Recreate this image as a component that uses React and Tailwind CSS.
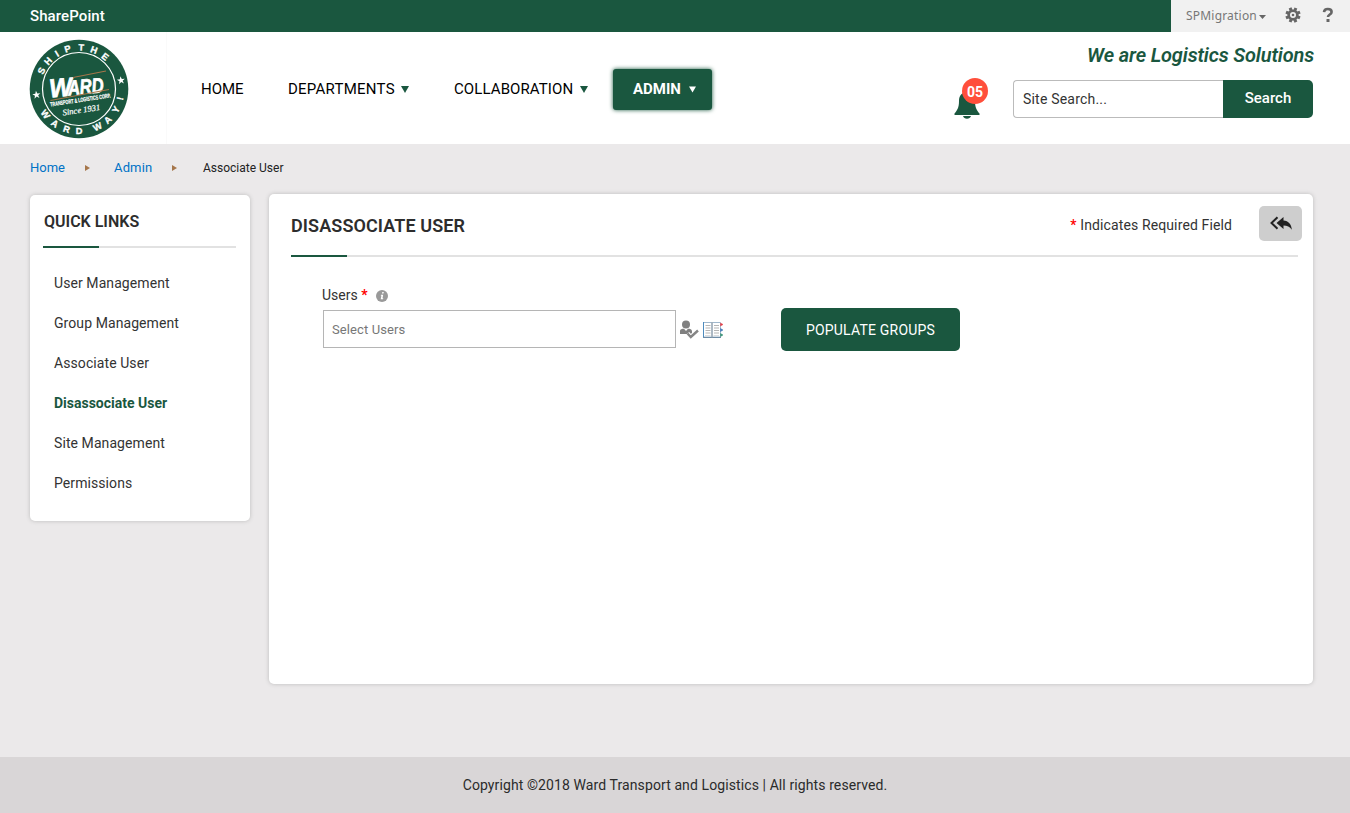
import React from 'react';

const GREEN = '#1a573f';

const topLetters = [['S', -64], ['H', -48], ['I', -32], ['P', -16], ['T', 3], ['H', 21], ['E', 39]];
const bottomLetters = [['W', 53], ['A', 35], ['R', 17], ['D', 0], ['W', -26], ['A', -43], ['Y', -61], ['!', -77]];
const star = 'M0-4.200 1-1.300 4-1.300 1.600.5 2.500 3.400 0 1.600-2.500 3.400-1.600.5-4-1.300-1-1.300Z';

function Logo() {
  return (
    <svg className="block h-[100px] w-[100px] overflow-visible" viewBox="0 0 100 100" fontFamily="'Liberation Sans', sans-serif" fontWeight="700" fill="#fff">
      <circle cx="50" cy="50" r="49.300" fill={GREEN} />
      <circle cx="50" cy="50" r="36.500" fill="none" stroke="#fff" strokeWidth="1.200" />
      {topLetters.map(([c, a], i) => (
        <text key={i} x="50" y="11.500" fontSize="9.200" textAnchor="middle" stroke="#fff" strokeWidth=".3" transform={`rotate(${a} 50 50)`}>{c}</text>
      ))}
      {bottomLetters.map(([c, a], i) => (
        <text key={i} x="50" y="95.300" fontSize="9.200" textAnchor="middle" stroke="#fff" strokeWidth=".3" transform={`rotate(${a} 50 50)`}>{c}</text>
      ))}
      <path d={star} transform="translate(7.500 56) rotate(-8)" />
      <path d={star} transform="translate(92 41.500) rotate(-8)" />
      <g transform="translate(21 58.500) rotate(-5)">
        <text x="0" y="0" fontSize="26" fontStyle="italic" textLength="23" lengthAdjust="spacingAndGlyphs" stroke="#fff" strokeWidth=".7">W</text>
        <text x="18.500" y="-.5" fontSize="21" fontStyle="italic" textLength="36" lengthAdjust="spacingAndGlyphs" stroke="#fff" strokeWidth=".7">ARD</text>
      </g>
      <path d="M44 38.500 77 32M21.500 61.500 80 50.500" stroke="#a5764b" strokeWidth="1.100" />
      <text transform="translate(21.500 67.500) rotate(-8.500)" fontSize="6" textLength="61" lengthAdjust="spacingAndGlyphs" stroke="#fff" strokeWidth=".2">TRANSPORT &amp; LOGISTICS CORP.</text>
      <text transform="translate(34 76.500) rotate(-8.500)" fontFamily="'Liberation Serif', serif" fontStyle="italic" fontWeight="400" fontSize="8.500" textLength="38" lengthAdjust="spacingAndGlyphs" stroke="#fff" strokeWidth=".2">Since 1931</text>
    </svg>
  );
}

function Down({ className }) {
  return <svg className={className} viewBox="0 0 8 7" fill="currentColor"><path d="M0 0h8L4 7z" /></svg>;
}

function TopBar() {
  return (
    <div className="flex h-8 justify-between bg-[#1a573f]">
      <div className="pl-[30px] text-[15px] leading-[33px] font-medium tracking-[0.1px] text-white">SharePoint</div>
      <div className="flex w-[179px] items-center bg-[#f1f1f1] pl-[15px] text-[#666]">
        <span className="w-[73px] font-['Noto_Sans'] text-[12px] leading-8 tracking-[0.2px] whitespace-nowrap text-[#777]">SPMigration</span>
        <svg className="mt-[2px] h-1 w-[7px]" viewBox="0 0 7 4" fill="currentColor"><path d="M0 0h7L3.500 4z" /></svg>
        <svg className="-mt-[2px] ml-[19px] h-4 w-4" viewBox="0 0 16 16">
          <circle cx="8" cy="8" r="4.300" fill="none" stroke="#666" strokeWidth="2.600" />
          <g stroke="#666" strokeWidth="3" transform="rotate(22.500 8 8)">
            <path d="M8 .4v3M8 12.600v3M.4 8h3M12.600 8h3M2.600 2.600l2.100 2.100M11.300 11.300l2.100 2.100M2.600 13.400l2.100-2.100M11.300 4.700l2.100-2.100" />
          </g>
          <circle cx="8" cy="8" r="1.300" fill="#666" />
        </svg>
        <svg className="-mt-[2px] ml-[21px] h-4 w-3" viewBox="0 0 12 16">
          <path d="M2 5.200C2.200 2.800 3.800 2 5.800 2c2.300 0 3.800 1.100 3.800 2.900 0 2.700-3.600 2.500-3.600 5.200" fill="none" stroke="#666" strokeWidth="2.600" />
          <path d="M4.500 12h3v3h-3z" fill="#666" />
        </svg>
      </div>
    </div>
  );
}

function Header() {
  return (
    <header className="flex h-[112px] bg-white">
      <div className="w-[167px] border-r border-[#fafafa] pt-[7px] pl-[29px]"><Logo /></div>
      <nav className="flex items-start pt-[37px] pl-[34px] text-[15px] leading-10 text-black">
        <span className="w-[87px]">HOME</span>
        <span className="flex h-10 w-[166px] items-center"><span className="w-[113px] tracking-[0.25px]">DEPARTMENTS</span><Down className="h-[7px] w-[8px] text-[#1a573f]" /></span>
        <span className="flex h-10 w-[159px] items-center"><span className="w-[126px] tracking-[0.1px]">COLLABORATION</span><Down className="h-[7px] w-[8px] text-[#1a573f]" /></span>
        <span className="flex h-[41px] w-[99px] items-center rounded-[3px] bg-[#1a573f] pb-px pl-5 font-bold text-white shadow-[0_0_4px_#1a573f]"><span className="w-[56px]">ADMIN</span><Down className="h-[7px] w-[7px]" /></span>
      </nav>
      <div className="ml-auto flex pr-[37px]">
        <div className="relative mt-[46px] mr-[23px] h-[42px] w-[36px]">
          <svg className="mt-[14px] block h-[27px] w-[26px]" viewBox="0 0 26 27" fill={GREEN}>
            <path d="M13 0c5 0 8 3.600 8 9 0 7 2 9.500 4.500 12.500V23H.5v-1.500C3 18.500 5 16 5 9c0-5.400 3-9 8-9zM9 24h8c-.7 2-2 2.700-4 2.700S9.700 26 9 24z" />
          </svg>
          <div className="absolute top-0 left-[8px] h-[26px] w-[26px] rounded-full bg-[#ff4f3b] text-center text-[14px] leading-[28px] font-bold text-white">05</div>
        </div>
        <div className="w-[300px]">
          <div className="-mr-px pt-[9px] text-right text-[20px] leading-7 font-semibold tracking-[-0.15px] whitespace-nowrap text-[#1a573f] italic">We are Logistics Solutions</div>
          <div className="mt-[11px] flex h-[38px]">
            <div className="w-[210px] rounded-l-[4px] border border-r-0 border-[#bbb] pl-[9px] text-[14px] leading-9 tracking-[0.2px] text-[#333]">Site Search...</div>
            <div className="w-[90px] rounded-r-[5px] bg-[#1a573f] text-center text-[15px] leading-9 font-medium text-white">Search</div>
          </div>
        </div>
      </div>
    </header>
  );
}

function Breadcrumb() {
  const arrow = <svg className="h-[6px] w-[5px]" viewBox="0 0 5 6" fill="#a5764b"><path d="M0 0v6l5-3z" /></svg>;
  return (
    <div className="flex h-[50px] items-start pl-[30px] text-[13px] leading-[48px] text-[#0072c6]">
      <span className="w-[55px]">Home</span><span className="flex h-[47px] w-[29px] items-center">{arrow}</span>
      <span className="w-[58px] tracking-[0.15px]">Admin</span><span className="flex h-[47px] w-[31px] items-center">{arrow}</span>
      <span className="text-[12px] text-[#222]">Associate User</span>
    </div>
  );
}

const links = ['User Management', 'Group Management', 'Associate User', 'Disassociate User', 'Site Management', 'Permissions'];

function QuickLinks() {
  return (
    <aside className="mt-px h-[326px] w-[220px] rounded-[5px] bg-white px-[13px] shadow-[0_0_4px_#bbb]">
      <h2 className="h-[51px] pl-px text-[16px] leading-[53px] font-semibold text-[#2d2d2d]">QUICK LINKS</h2>
      <div className="h-[2px] w-[193px] bg-[#e2e2e2]"><div className="h-full w-14 bg-[#1a573f]" /></div>
      <ul className="pt-[15px] pl-[11px] text-[14px] leading-10 text-[#333]">
        {links.map((l, i) => <li key={l} className={i === 3 ? 'font-bold text-[#1a573f]' : 'tracking-[0.08px]'}>{l}</li>)}
      </ul>
    </aside>
  );
}

function MainPanel() {
  return (
    <main className="h-[490px] w-[1044px] rounded-[5px] bg-white pr-[11px] pl-[22px] shadow-[0_0_4px_#bbb]">
      <div className="flex h-[61px] items-start">
        <h1 className="text-[18px] leading-[64px] font-semibold tracking-[0.1px] text-[#2d2d2d]">DISASSOCIATE USER</h1>
        <div className="mr-[27px] ml-auto text-[14px] leading-[62px] tracking-[0.12px] text-[#333]"><span className="font-medium text-[#f00]">*</span> Indicates Required Field</div>
        <div className="mt-3 flex h-[35px] w-[43px] items-center justify-center rounded-[5px] bg-[#cecece]">
          <svg className="h-[15px] w-[22px]" viewBox="0 0 22 15" fill="#222">
            <path d="M13.500 1v3.500c5 .5 8 3.500 8.300 9.200-2-3.200-4.600-4.200-8.300-4.200V13L6.500 7z" />
            <path d="M7.500 1.300 1.500 7l6 5.700" fill="none" stroke="#222" strokeWidth="2" />
          </svg>
        </div>
      </div>
      <div className="h-[2px] w-[1007px] bg-[#e2e2e2]"><div className="h-full w-14 bg-[#1a573f]" /></div>
      <div className="flex pl-[31px]">
        <div className="w-[355px] pt-[28px]">
          <div className="flex h-[25px] items-start text-[14px] leading-5 text-[#333]">
            <span>Users <span className="font-bold text-[#f00]">*</span></span>
            <svg className="mt-[5px] ml-2 h-3 w-3" viewBox="0 0 12 12"><circle cx="6" cy="6" r="6" fill="#999" /><path d="M6.300 2h1.500l-.3 1.500H6zM5 4.800h2.200L6.500 8.300h.8L7 9.300H4.700l.7-3.500h-.6z" fill="#fff" /></svg>
          </div>
          <div className="ml-px h-[38px] w-[353px] border border-[#b5b5b5] pl-2 text-[13px] leading-[37px] tracking-[0.1px] text-[#777]">Select Users</div>
        </div>
        <svg className="mt-[63px] ml-[3px] h-[19px] w-[19px]" viewBox="0 0 19 19" fill="#808080">
          <circle cx="6" cy="4.500" r="4" />
          <path d="M0 11.500C0 9 2 8.800 4 8.800l2 2.200 2-2.200c2 0 4 .4 4 2.700V14H0z" />
          <path d="m7.500 13.500 3.300 3.500L18 10" fill="none" stroke="#fff" strokeWidth="4.500" />
          <path d="m7.500 13.500 3.300 3.500L18 10.500" fill="none" stroke="#858585" strokeWidth="2.400" />
        </svg>
        <svg className="mt-[64px] ml-1 h-[18px] w-[20px]" viewBox="0 0 20 18">
          <path d="M.5 1.500h8.500v14.500H.5zM9 1.500h8.500V16H9z" fill="#fff" stroke="#a0b8cd" />
          <path d="M.5 1v16" stroke="#4d8bbe" />
          <path d="M0 16.500h18" stroke="#708da6" />
          <path d="M9 1v15.500" stroke="#a2a8ad" />
          <path d="M2.500 4.500h5m-5 2.500h5m-5 2.500h5m-5 2.500h5M11 4.500h5M11 7h5m-5 2.500h5M11 12h5" stroke="#b5b5b5" />
          <path d="M2 14.500h5.500m3 0H16" stroke="#ddd" />
          <path d="M17.500 2l2.500 1.500-2.500 1.500z" fill="#e2414b" stroke="#e2414b" strokeWidth=".5" />
          <path d="M17.500 7.500 20 9l-2.500 1.500z" fill="#3e76b7" stroke="#3e76b7" strokeWidth=".5" />
          <path d="M17.500 12.500 20 14l-2.500 1.500z" fill="#359072" stroke="#359072" strokeWidth=".5" />
        </svg>
        <div className="mt-[51px] ml-[58px] h-[43px] w-[179px] rounded-[5px] bg-[#1a573f] text-center text-[14px] leading-[44px] tracking-[0.2px] text-white">POPULATE GROUPS</div>
      </div>
    </main>
  );
}

export default function App() {
  return (
    <div className="flex h-[813px] w-[1350px] flex-col overflow-hidden bg-[#ebe9ea] font-[Roboto,sans-serif]">
      <TopBar />
      <Header />
      <Breadcrumb />
      <div className="flex items-start gap-[19px] pl-[30px]"><QuickLinks /><MainPanel /></div>
      <footer className="mt-auto h-14 bg-[#d9d6d7] text-center text-[14px] leading-[57px] tracking-[0.1px] text-[#2b2b2b]">Copyright ©2018 Ward Transport and Logistics | All rights reserved.</footer>
    </div>
  );
}
